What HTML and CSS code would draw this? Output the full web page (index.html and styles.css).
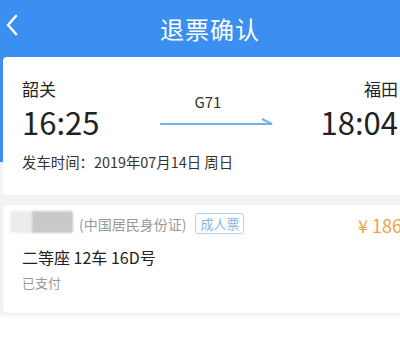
FILE: index.html
```html
<!DOCTYPE html>
<html lang="zh-CN">
<head>
<meta charset="utf-8">
<title>退票确认</title>
<link rel="stylesheet" href="styles.css">
</head>
<body>
<div class="page">
  <header class="topbar">
    <svg class="back" width="14" height="22" viewBox="0 0 14 22"><path d="M11 2 L3 11 L11 20" fill="none" stroke="#fff" stroke-width="2.6" stroke-linecap="round" stroke-linejoin="round"/></svg>
    <h1 class="title">退票确认</h1>
  </header>
  <section class="card trip">
    <div class="route">
      <div class="stop">
        <div class="city">韶关</div>
        <div class="time">16:25</div>
      </div>
      <div class="train">
        <div class="code">G71</div>
        <svg class="arrow" width="113" height="8" viewBox="0 0 113 8"><path d="M0 6 H112 L102 1" fill="none" stroke="#78aee6" stroke-width="2"/></svg>
      </div>
      <div class="stop end">
        <div class="city">福田</div>
        <div class="time">18:04</div>
      </div>
    </div>
    <div class="depart">发车时间：2019年07月14日 周日</div>
  </section>
  <section class="card passenger">
    <div class="row">
      <span class="name"></span>
      <span class="idtype">(中国居民身份证)</span>
      <span class="tag">成人票</span>
      <span class="price">¥ 186.5</span>
    </div>
    <div class="seat">二等座 12车 16D号</div>
    <div class="status">已支付</div>
  </section>
</div>
</body>
</html>
```
FILE: styles.css
```css
html, body {
  margin: 0;
  padding: 0;
  overflow: hidden;
  background: #fff;
}
body {
  font-family: "Noto Sans CJK SC", "Noto Sans", sans-serif;
  color: #333;
}
.page {
  width: 420px;
  height: 341px;
  background: linear-gradient(#3b8ff0 0, #3b8ff0 162px, #f3f3f3 162px, #f3f3f3 313px, #fff 319px);
}
.topbar {
  height: 57px;
  display: flex;
  align-items: center;
  justify-content: center;
  position: relative;
}
.back {
  position: absolute;
  left: 5px;
  top: 14px;
}
.title {
  margin: 0;
  color: #fff;
  font-size: 24px;
  font-weight: 400;
  letter-spacing: 1px;
}
.card {
  background: #fff;
  margin: 0 3px;
  border-radius: 4px;
}
.trip {
  height: 138px;
  padding: 20px 19px 0;
  box-sizing: border-box;
}
.route {
  display: flex;
  align-items: flex-start;
}
.city {
  font-size: 17px;
  line-height: 24px;
  color: #222;
}
.time {
  font-size: 31px;
  line-height: 38px;
  color: #222;
  margin-top: 2px;
}
.end {
  text-align: right;
  margin-left: auto;
}
.train {
  display: flex;
  flex-direction: column;
  align-items: center;
  margin-top: 15px;
  margin-left: 61px;
}
.code {
  font-size: 15px;
  line-height: 20px;
  color: #333;
  padding-right: 18px;
}
.arrow { display: block; margin-top: 6px; }
.depart {
  margin-top: 11px;
  font-size: 14.4px;
  line-height: 20px;
  color: #333;
}
.passenger {
  margin-top: 10px;
  height: 108px;
  padding: 1px 0 0 7px;
  box-sizing: border-box;
  box-shadow: 0 1px 3px rgba(0,0,0,0.04);
}
.row {
  display: flex;
  align-items: center;
}
.name {
  width: 63px;
  height: 22px;
  background: linear-gradient(90deg, #ececec 0, #ececec 22px, #c9c9c9 22px, #c9c9c9 100%);
  filter: blur(1px);
  border-radius: 2px;
  margin-right: 6px;
}
.idtype {
  font-size: 14px;
  color: #999;
  margin-top: 3px;
}
.tag {
  margin-left: 9px;
  margin-top: 3px;
  font-size: 13px;
  line-height: 17px;
  color: #86b6e8;
  border: 1px solid #b1d2f2;
  border-radius: 3px;
  padding: 1px 4px;
}
.price {
  margin-left: auto;
  margin-top: 6px;
  font-size: 18px;
  color: #f0a24a;
  white-space: nowrap;
}
.seat {
  margin: 8px 0 0 12px;
  font-size: 16px;
  line-height: 22px;
  color: #222;
}
.status {
  margin: 6px 0 0 12px;
  font-size: 13px;
  line-height: 18px;
  color: #999;
}
```
